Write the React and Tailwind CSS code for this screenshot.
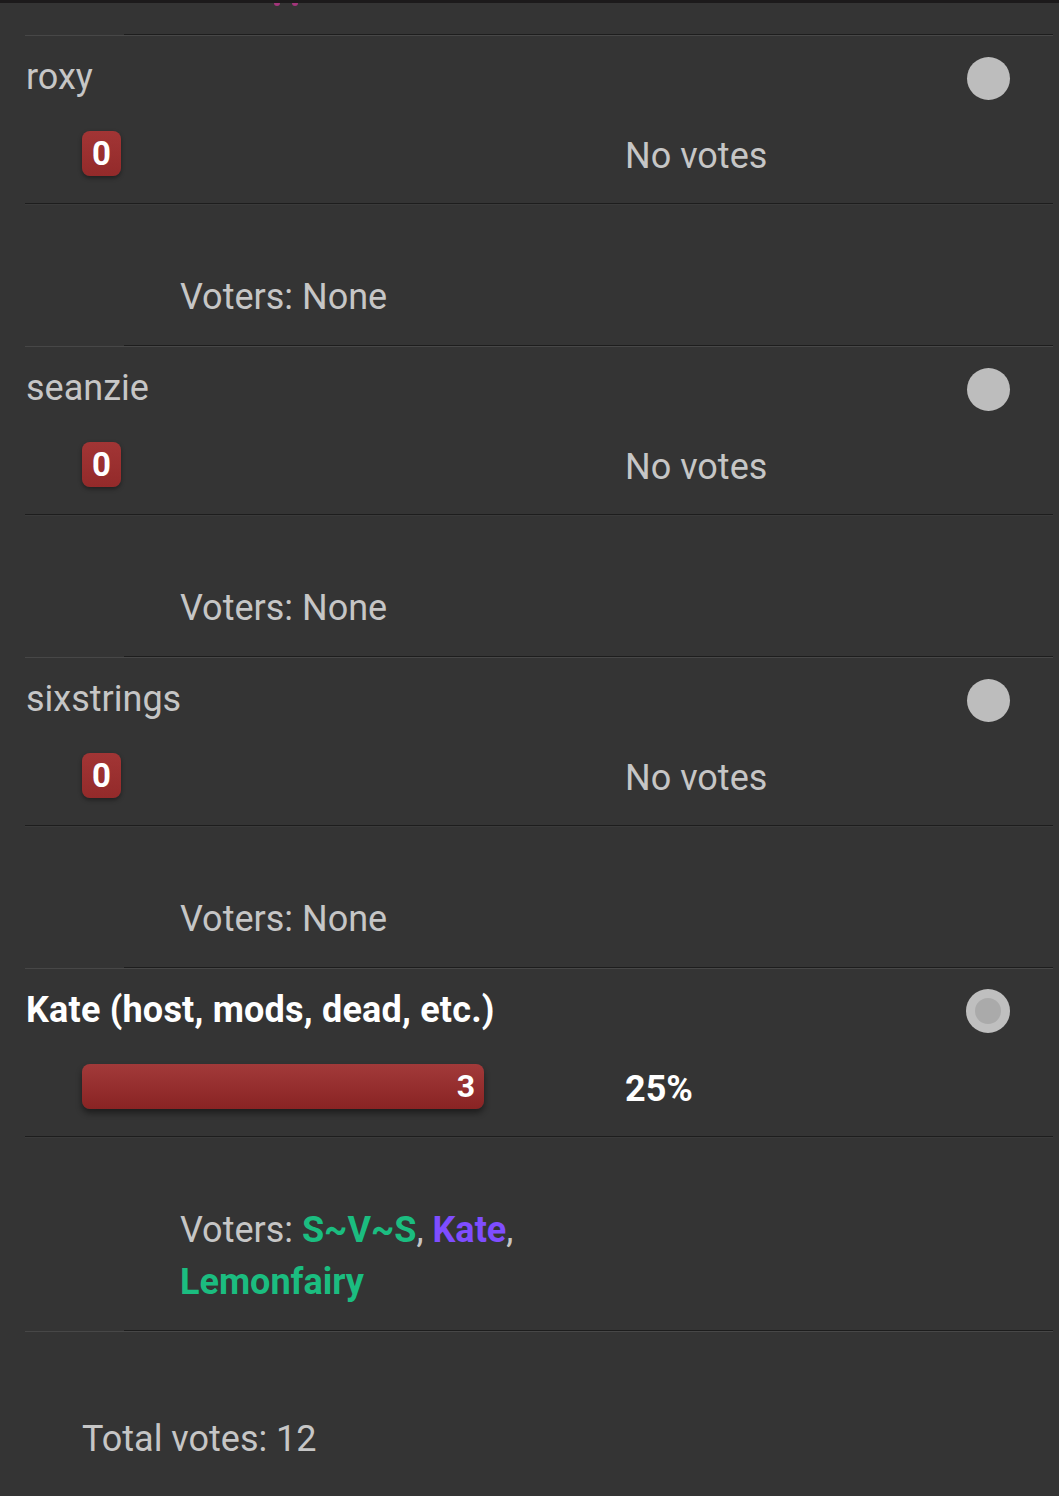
import React from "react";

const options = [
  { name: "roxy", votes: 0, voters: [] },
  { name: "seanzie", votes: 0, voters: [] },
  { name: "sixstrings", votes: 0, voters: [] },
  {
    name: "Kate (host, mods, dead, etc.)",
    votes: 3,
    percent: "25%",
    selected: true,
    voters: [
      { name: "S~V~S", color: "text-[#1bbd80]" },
      { name: "Kate", color: "text-[#7f4dff]" },
      { name: "Lemonfairy", color: "text-[#1bbd80]" },
    ],
  },
];

function RowDivider() {
  return (
    <div>
      <div className="ml-[99px] h-px bg-[#1d1d1d]" />
      <div className="h-px bg-[#474747]" />
    </div>
  );
}

function Radio({ selected }) {
  if (selected) {
    return (
      <div className="mr-[43px] mt-1 flex h-[44px] w-[44px] items-center justify-center rounded-full bg-[#bfbfbf]">
        <div className="h-[26px] w-[26px] rounded-full bg-[#aaaaaa]" />
      </div>
    );
  }
  return <div className="mr-[43px] mt-1 h-[43px] w-[43px] rounded-full bg-[#bdbdbd]" />;
}

function Option({ opt }) {
  return (
    <div>
      <RowDivider />
      <div className="flex h-[80px] items-center justify-between">
        <span className={opt.selected ? "mt-[2px] pl-px font-bold tracking-[0.2px] text-white" : "mt-[2px] pl-px text-[#c6c6c6]"}>{opt.name}</span>
        <Radio selected={opt.selected} />
      </div>
      <div className="mb-[13px] flex h-[74px] items-center">
        <div className="w-[600px] pl-[57px]">
          {opt.votes > 0 ? (
            <div className="flex h-[45px] w-[402px] items-center justify-end rounded-lg bg-gradient-to-b from-[#a23a3a] to-[#892323] pr-[9px] shadow-[0_4px_6px_rgba(0,0,0,0.45)]">
              <span className="text-[32px] font-bold leading-none text-white">{opt.votes}</span>
            </div>
          ) : (
            <div className="flex h-[45px] w-[39px] items-center justify-center rounded-lg bg-gradient-to-b from-[#a23535] to-[#932a2a] shadow-[0_2px_4px_rgba(0,0,0,0.4)]">
              <span className="text-[33px] font-bold leading-none text-white">0</span>
            </div>
          )}
        </div>
        <span className={opt.percent ? "mt-[5px] font-bold text-white" : "mt-[5px] text-[#c6c6c6]"}>
          {opt.percent || "No votes"}
        </span>
      </div>
      <div>
        <div className="h-px bg-[#1d1d1d]" />
        <div className="h-px bg-[#3a3a3a]" />
      </div>
      <div className="w-[570px] pb-[22px] pl-[155px] pt-[66px] leading-[52px] text-[#c6c6c6]">
        Voters:{" "}
        {opt.voters.length === 0
          ? "None"
          : opt.voters.map((v, i) => (
              <React.Fragment key={v.name}>
                <span className={`font-bold ${v.color}`}>{v.name}</span>
                {i < opt.voters.length - 1 ? ", " : ""}
              </React.Fragment>
            ))}
      </div>
    </div>
  );
}

export default function App() {
  return (
    <div className="min-h-[1496px] w-[1059px] bg-[#343434] font-['Roboto',sans-serif] text-[36px] leading-[42px]">
      <div className="h-[3px] bg-[#1c1a1b]" />
      <div className="flex h-[31px] gap-[12px] pl-[274px]">
        <div className="h-[3px] w-[6px] rounded-b-full bg-[#a2357a]" />
        <div className="h-[3px] w-[6px] rounded-b-full bg-[#a2357a]" />
      </div>
      <div className="ml-[25px] mr-[6px]">
        {options.map((opt) => (
          <Option key={opt.name} opt={opt} />
        ))}
        <RowDivider />
        <div className="pl-[57px] pt-[86px] text-[#c6c6c6]">Total votes: 12</div>
      </div>
    </div>
  );
}
